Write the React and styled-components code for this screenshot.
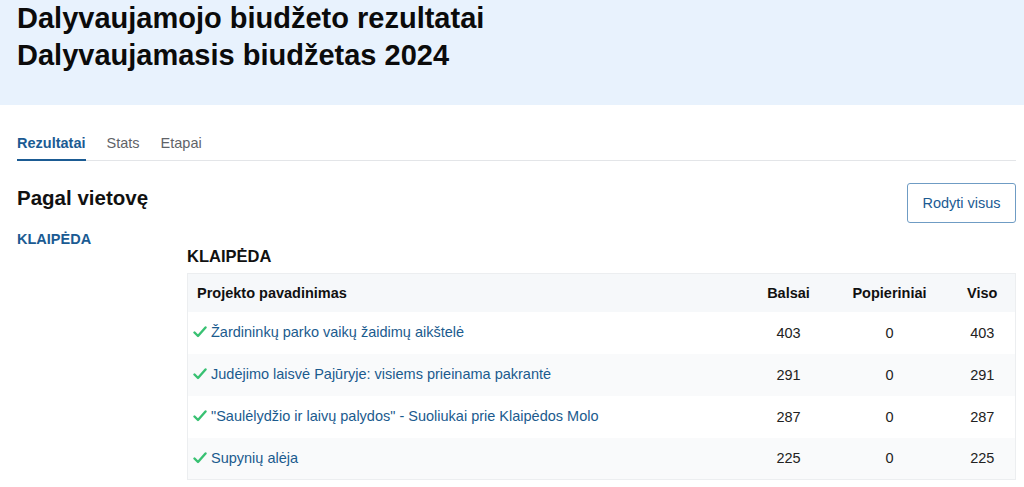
import React from "react";
import styled, { createGlobalStyle } from "styled-components";

const Global = createGlobalStyle`
  * { box-sizing: border-box; }
  body { margin: 0; background: #fff; font-family: "Liberation Sans", Arial, sans-serif; color: #111; }
`;

const Hero = styled.header`
  background: #e8f2fd;
  height: 105px;
  padding: 0 17px;
`;

const Title = styled.h1`
  margin: 0;
  font-size: 29px;
  line-height: 37px;
  font-weight: 700;
  color: #0b0b0b;
`;

const Page = styled.main`
  padding: 0 8px 0 17px;
`;

const Tabs = styled.nav`
  display: flex;
  gap: 21px;
  margin-top: 26px;
  border-bottom: 1px solid #e3e5e8;
`;

const Tab = styled.a`
  font-size: 14.5px;
  line-height: 20px;
  padding: 2px 0 6px;
  font-weight: ${(p) => (p.$active ? 700 : 400)};
  color: ${(p) => (p.$active ? "#1b5b93" : "#5f6368")};
  border-bottom: 2px solid ${(p) => (p.$active ? "#1b5b93" : "transparent")};
  margin-bottom: -1px;
  cursor: pointer;
`;

const TopRow = styled.div`
  display: flex;
  justify-content: space-between;
  align-items: flex-start;
  margin-top: 22px;
`;

const H2 = styled.h2`
  margin: 2px 0 0;
  font-size: 20.5px;
  line-height: 26px;
  font-weight: 700;
  color: #111;
`;

const Button = styled.button`
  font-family: inherit;
  font-size: 14.5px;
  color: #1b5b93;
  background: #fff;
  border: 1px solid #6f9cc4;
  border-radius: 3px;
  height: 40px;
  width: 109px;
  padding: 0;
  cursor: pointer;
`;

const Body = styled.div`
  display: grid;
  grid-template-columns: 170px 1fr;
  margin-top: 7px;
`;

const SideLink = styled.a`
  font-size: 14.5px;
  font-weight: 700;
  color: #1b5b93;
  line-height: 18px;
`;

const Section = styled.section``;

const H3 = styled.h3`
  margin: 16px 0 0;
  font-size: 16.5px;
  line-height: 20px;
  font-weight: 700;
  color: #111;
`;

const Table = styled.table`
  width: 100%;
  border-collapse: collapse;
  margin-top: 7px;
  border: 1px solid #eceef0;
  font-size: 14.5px;
`;

const Th = styled.th`
  height: 38px;
  background: #f6f8fa;
  font-weight: 700;
  color: #111;
  text-align: ${(p) => p.$align || "center"};
  padding: ${(p) => (p.$align === "left" ? "0 9px" : "0")};
  width: ${(p) => p.$w || "auto"};
`;

const Tr = styled.tr`
  background: ${(p) => (p.$striped ? "#f9fafb" : "#fff")};
`;

const Td = styled.td`
  height: 42px;
  text-align: ${(p) => p.$align || "center"};
  padding: ${(p) => (p.$align === "left" ? "0 5px" : "0")};
  color: #222;
`;

const ProjectLink = styled.a`
  display: inline-flex;
  align-items: center;
  gap: 4px;
  color: #1b5b8e;
  cursor: pointer;
`;

const Check = () => (
  <svg width="14" height="12" viewBox="0 0 14 12">
    <path d="M1.5 6.5 L5 10 L12.5 1.5" fill="none" stroke="#38c172" strokeWidth="2.4" strokeLinecap="round" strokeLinejoin="round" />
  </svg>
);

const rows = [
  { name: "Žardininkų parko vaikų žaidimų aikštelė", b: 403, p: 0, v: 403 },
  { name: "Judėjimo laisvė Pajūryje: visiems prieinama pakrantė", b: 291, p: 0, v: 291 },
  { name: "\"Saulėlydžio ir laivų palydos\" - Suoliukai prie Klaipėdos Molo", b: 287, p: 0, v: 287 },
  { name: "Supynių alėja", b: 225, p: 0, v: 225 },
];

export default function App() {
  return (
    <>
      <Global />
      <Hero>
        <Title>
          Dalyvaujamojo biudžeto rezultatai
          <br />
          Dalyvaujamasis biudžetas 2024
        </Title>
      </Hero>
      <Page>
        <Tabs>
          <Tab $active>Rezultatai</Tab>
          <Tab>Stats</Tab>
          <Tab>Etapai</Tab>
        </Tabs>
        <TopRow>
          <H2>Pagal vietovę</H2>
          <Button>Rodyti visus</Button>
        </TopRow>
        <Body>
          <div>
            <SideLink>KLAIPĖDA</SideLink>
          </div>
          <Section>
            <H3>KLAIPĖDA</H3>
            <Table>
              <thead>
                <tr>
                  <Th $align="left">Projekto pavadinimas</Th>
                  <Th $w="82px">Balsai</Th>
                  <Th $w="120px">Popieriniai</Th>
                  <Th $w="66px">Viso</Th>
                </tr>
              </thead>
              <tbody>
                {rows.map((r, i) => (
                  <Tr key={r.name} $striped={i % 2 === 1}>
                    <Td $align="left">
                      <ProjectLink>
                        <Check />
                        {r.name}
                      </ProjectLink>
                    </Td>
                    <Td>{r.b}</Td>
                    <Td>{r.p}</Td>
                    <Td>{r.v}</Td>
                  </Tr>
                ))}
              </tbody>
            </Table>
          </Section>
        </Body>
      </Page>
    </>
  );
}
